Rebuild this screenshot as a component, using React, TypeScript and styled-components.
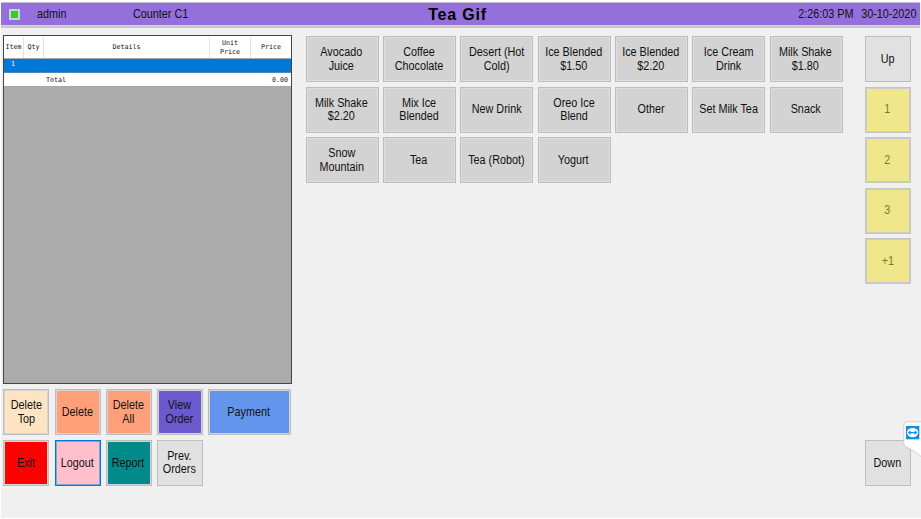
import React from 'react';
import styled, { createGlobalStyle } from 'styled-components';

const GlobalStyle = createGlobalStyle`
  * { box-sizing: border-box; }
  html, body { margin: 0; overflow: hidden; background: #fff; }
  body { font-family: "Liberation Sans", Arial, sans-serif; font-size: 12px; color: #111; }
`;

const Screen = styled.div`
  position: relative;
  width: 921px;
  height: 519px;
  padding: 2px 0 1px 1px;
  background: #fff;
  overflow: hidden;
`;

const Window = styled.div`
  height: 516px;
  background: #f0f0f0;
`;

const TopBar = styled.header`
  display: grid;
  grid-template-columns: 36px 96px 280px 89px 1fr auto 63px;
  align-items: center;
  height: 26px;
  width: 919px;
  padding-right: 4px;
  background: #9370db;
  border-top: 1px solid #c4bfd0;
  border-bottom: 2px solid #c8c8c8;
  box-shadow: inset 0 -1px 0 #d8d0e8;
  line-height: 14px;
  white-space: nowrap;
`;

const Status = styled.span`
  width: 11px;
  height: 11px;
  margin-left: 8px;
  border: 2.5px solid #d0d0d0;
  background: #32cd32;
`;

const Title = styled.h1`
  margin: 0;
  font-size: 16px;
  line-height: 20px;
  font-weight: bold;
  letter-spacing: 0.8px;
  text-align: center;
  color: #000;
`;

/* Slightly condensed interface lettering. */
const Narrow = styled.span<{ $from?: 'left' | 'right' | 'center' }>`
  display: block;
  transform: scaleX(0.9);
  transform-origin: ${p => p.$from || 'center'} center;
  justify-self: ${p => (p.$from === 'right' ? 'end' : 'start')};
  padding-bottom: ${p => (p.$from ? '2px' : '0')};
`;

const Workspace = styled.main`
  display: grid;
  grid-template-columns: 289px 573.3px 46px;
  padding: 7px 0 0 2px;
`;

const Register = styled.section`
  display: flex;
  flex-direction: column;
`;

const OrderList = styled.div`
  width: 289px;
  height: 349px;
  border: 1px solid #444;
  background: #ababab;
  font-family: "DejaVu Sans Mono", monospace;
  font-size: 6.7px;
  line-height: 8.5px;
`;

const OrderRow = styled.div<{ $kind: 'head' | 'selected' | 'total' }>`
  display: grid;
  grid-template-columns: 20px 20px 166px 41px 40px;
  height: ${p => (p.$kind === 'head' ? 23 : 14)}px;
  padding-top: ${p => (p.$kind === 'selected' ? 0 : 1)}px;
  background: ${p => (p.$kind === 'selected' ? '#0078d7' : '#fff')};
  color: ${p => (p.$kind === 'selected' ? '#fff' : '#111')};
  border-bottom: 1px solid ${p => (p.$kind === 'selected' ? '#4c87b8' : '#a8a8a8')};
`;

const Cell = styled.span<{ $align?: string; $line?: boolean }>`
  display: flex;
  align-items: center;
  justify-content: ${p => p.$align || 'center'};
  padding: ${p => (p.$align ? '0 3px 0 2px' : '0')};
  text-align: center;
  white-space: nowrap;
  border-right: ${p => (p.$line ? '1px solid #e3e3e3' : '0')};
`;

const RowNumber = styled(Cell)`
  padding: 0 2px 2px 0;
`;

const Actions = styled.div`
  display: grid;
  grid-template-columns: 46px 46px 46px 46px 83px;
  grid-template-rows: 46px 46px;
  gap: 4.8px 5.2px;
  padding: 5px 0 0 0.4px;
`;

const KeyBox = styled.button<{ $bg: string; $edge?: string; $inner?: string; $ink?: string }>`
  display: flex;
  align-items: center;
  justify-content: center;
  width: 100%;
  height: 46px;
  margin: 0;
  padding: 1px 1px 0 0;
  border: 1px solid ${p => p.$edge || '#bdbdbd'};
  box-shadow: inset 0 0 0 1px ${p => p.$inner || '#d4d4d4'};
  background: ${p => p.$bg};
  color: ${p => p.$ink || '#111'};
  font: inherit;
  line-height: 13.5px;
  text-align: center;
  white-space: pre;
`;

interface KeyProps {
  label: string;
  bg: string;
  edge?: string;
  inner?: string;
  ink?: string;
}

const Key = ({ label, bg, edge, inner, ink }: KeyProps) => (
  <KeyBox $bg={bg} $edge={edge} $inner={inner} $ink={ink}>
    <Narrow>{label}</Narrow>
  </KeyBox>
);

const Menu = styled.section`
  display: grid;
  grid-template-columns: repeat(7, 73px);
  grid-auto-rows: 46px;
  align-content: start;
  gap: 4.5px 4.35px;
  padding: 1px 0 0 13.5px;
`;

const Pager = styled.nav`
  display: flex;
  flex-direction: column;
  gap: 4.5px;
  height: 451px;
  padding-top: 1px;
`;

const Spacer = styled.div`
  flex: 1;
`;

const RemoteTab = styled.div`
  position: absolute;
  left: 903px;
  top: 421px;
  width: 18px;
  height: 38px;
`;

const menu = [
  'Avocado\nJuice', 'Coffee\nChocolate', 'Desert (Hot\nCold)', 'Ice Blended\n$1.50', 'Ice Blended\n$2.20', 'Ice Cream\nDrink', 'Milk Shake\n$1.80',
  'Milk Shake\n$2.20', 'Mix Ice\nBlended', 'New Drink', 'Oreo Ice\nBlend', 'Other', 'Set Milk Tea', 'Snack',
  'Snow\nMountain', 'Tea', 'Tea (Robot)', 'Yogurt',
];

const actions: KeyProps[] = [
  { label: 'Delete\nTop', bg: '#ffe4c4' },
  { label: 'Delete', bg: '#ffa07a' },
  { label: 'Delete\nAll', bg: '#ffa07a' },
  { label: 'View\nOrder', bg: '#6a5acd' },
  { label: 'Payment', bg: '#6495ed' },
  { label: 'Exit', bg: '#ff0000' },
  { label: 'Logout', bg: '#ffc0cb', edge: '#0078d7', inner: '#7aa9d8' },
  { label: 'Report', bg: '#008b8b' },
  { label: 'Prev.\nOrders', bg: '#e1e1e1', inner: '#e1e1e1' },
];

export default function App() {
  return (
    <Screen>
      <GlobalStyle />
      <Window>
        <TopBar>
          <Status />
          <Narrow $from="left">admin</Narrow>
          <Narrow $from="left">Counter C1</Narrow>
          <Title>Tea Gif</Title>
          <span />
          <Narrow $from="right">2:26:03 PM</Narrow>
          <Narrow $from="right">30-10-2020</Narrow>
        </TopBar>
        <Workspace>
          <Register>
            <OrderList>
              <OrderRow $kind="head">
                <Cell $line>Item</Cell>
                <Cell $line>Qty</Cell>
                <Cell $line>Details</Cell>
                <Cell $line>Unit<br />Price</Cell>
                <Cell>Price</Cell>
              </OrderRow>
              <OrderRow $kind="selected">
                <RowNumber>1</RowNumber>
              </OrderRow>
              <OrderRow $kind="total">
                <Cell /><Cell />
                <Cell $align="flex-start">Total</Cell>
                <Cell />
                <Cell $align="flex-end">0.00</Cell>
              </OrderRow>
            </OrderList>
            <Actions>
              {actions.map(a => <Key key={a.label} {...a} />)}
            </Actions>
          </Register>
          <Menu>
            {menu.map(name => <Key key={name} label={name} bg="#d3d3d3" inner="#dedede" />)}
          </Menu>
          <Pager>
            <Key label="Up" bg="#e1e1e1" inner="#e1e1e1" />
            {['1', '2', '3', '+1'].map(n => (
              <Key key={n} label={n} bg="#f0e68c" edge="#c4c4c4" inner="#cccccc" ink="#82762c" />
            ))}
            <Spacer />
            <Key label="Down" bg="#e1e1e1" inner="#e1e1e1" />
          </Pager>
        </Workspace>
      </Window>
      <RemoteTab>
        <svg width="18" height="38" viewBox="0 0 18 38">
          <path d="M19 .8H4Q.8.8.8 4v18q0 2.500 2 3.600l8 4.400q4 2 8.200 6.500Z" fill="#fff" stroke="#c8c8c8" strokeWidth=".8" />
          <rect x="3" y="5" width="13.300" height="13.300" fill="#0e8ee9" />
          <ellipse cx="9.600" cy="11.600" rx="5.600" ry="4.700" fill="#fff" />
          <path d="M4.800 11.600 7.600 9.200v1.700h4V9.200l2.800 2.400-2.800 2.400v-1.700h-4V14Z" fill="#0e8ee9" />
        </svg>
      </RemoteTab>
    </Screen>
  );
}
